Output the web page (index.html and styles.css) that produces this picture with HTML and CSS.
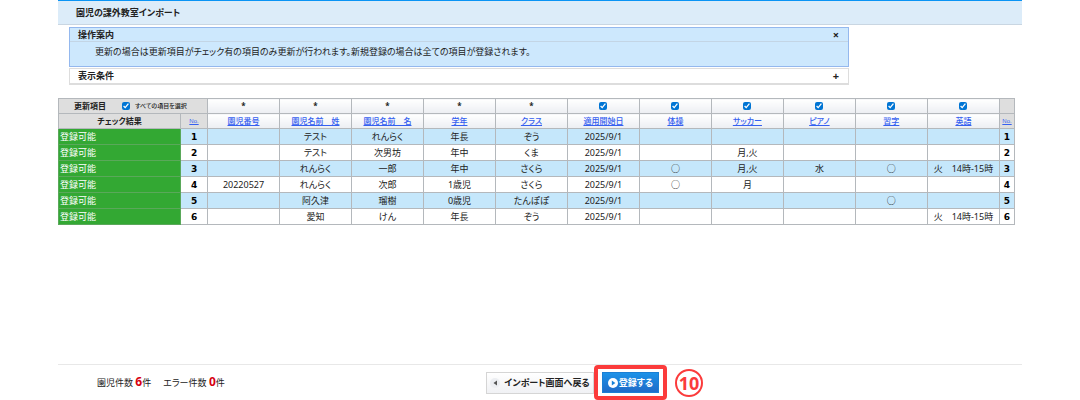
FILE: index.html
```html
<!DOCTYPE html>
<html lang="ja">
<head>
  <meta charset="UTF-8">
  <meta name="viewport" content="width=device-width, initial-scale=1.0">
  <title>園児の課外教室インポート</title>
  <link rel="stylesheet" href="styles.css">
</head>
<body>
  <div class="page">
    <header class="page-header">
      <h1>園児の課外教室インポート</h1>
    </header>

    <main>
      <div class="panels">
        <section class="panel panel-guide">
          <div class="panel-title">
            <h2>操作案内</h2>
            <button type="button" class="toggle" aria-label="閉じる">×</button>
          </div>
          <p class="panel-text">更新の場合は更新項目がチェック有の項目のみ更新が行われます。新規登録の場合は全ての項目が登録されます。</p>
        </section>
        <section class="panel">
          <div class="panel-title">
            <h2>表示条件</h2>
            <button type="button" class="toggle" aria-label="開く">+</button>
          </div>
        </section>
      </div>

      <table class="import-table">
        <colgroup>
          <col class="col-result">
          <col class="col-no">
          <col span="11">
          <col class="col-no-end">
        </colgroup>
        <thead>
          <tr>
            <th colspan="2" class="gray">
              <div class="select-all">
                <span>更新項目</span>
                <label><input type="checkbox" checked>すべての項目を選択</label>
              </div>
            </th>
            <th>*</th>
            <th>*</th>
            <th>*</th>
            <th>*</th>
            <th>*</th>
            <th><input type="checkbox" aria-label="適用開始日" checked></th>
            <th><input type="checkbox" aria-label="体操" checked></th>
            <th><input type="checkbox" aria-label="サッカー" checked></th>
            <th><input type="checkbox" aria-label="ピアノ" checked></th>
            <th><input type="checkbox" aria-label="習字" checked></th>
            <th><input type="checkbox" aria-label="英語" checked></th>
            <th class="gray"></th>
          </tr>
          <tr>
            <th class="gray">チェック結果</th>
            <th class="gray no-link"><a href="#">No.</a></th>
            <th><a href="#">園児番号</a></th>
            <th><a href="#">園児名前&#12288;姓</a></th>
            <th><a href="#">園児名前&#12288;名</a></th>
            <th><a href="#">学年</a></th>
            <th><a href="#">クラス</a></th>
            <th><a href="#">適用開始日</a></th>
            <th><a href="#">体操</a></th>
            <th><a href="#">サッカー</a></th>
            <th><a href="#">ピアノ</a></th>
            <th><a href="#">習字</a></th>
            <th><a href="#">英語</a></th>
            <th class="gray no-link"><a href="#">No.</a></th>
          </tr>
        </thead>
        <tbody>
          <tr>
            <td class="result">登録可能</td><td class="no">1</td>
            <td></td><td>テスト</td><td>れんらく</td><td>年長</td><td>ぞう</td><td>2025/9/1</td>
            <td></td><td></td><td></td><td></td><td></td><td class="no">1</td>
          </tr>
          <tr>
            <td class="result">登録可能</td><td class="no">2</td>
            <td></td><td>テスト</td><td>次男坊</td><td>年中</td><td>くま</td><td>2025/9/1</td>
            <td></td><td>月,火</td><td></td><td></td><td></td><td class="no">2</td>
          </tr>
          <tr>
            <td class="result">登録可能</td><td class="no">3</td>
            <td></td><td>れんらく</td><td>一郎</td><td>年中</td><td>さくら</td><td>2025/9/1</td>
            <td>○</td><td>月,火</td><td>水</td><td>○</td><td>火&#12288;14時-15時</td><td class="no">3</td>
          </tr>
          <tr>
            <td class="result">登録可能</td><td class="no">4</td>
            <td>20220527</td><td>れんらく</td><td>次郎</td><td>1歳児</td><td>さくら</td><td>2025/9/1</td>
            <td>○</td><td>月</td><td></td><td></td><td></td><td class="no">4</td>
          </tr>
          <tr>
            <td class="result">登録可能</td><td class="no">5</td>
            <td></td><td>阿久津</td><td>瑠樹</td><td>0歳児</td><td>たんぽぽ</td><td>2025/9/1</td>
            <td></td><td></td><td></td><td>○</td><td></td><td class="no">5</td>
          </tr>
          <tr>
            <td class="result">登録可能</td><td class="no">6</td>
            <td></td><td>愛知</td><td>けん</td><td>年長</td><td>ぞう</td><td>2025/9/1</td>
            <td></td><td></td><td></td><td></td><td>火&#12288;14時-15時</td><td class="no">6</td>
          </tr>
        </tbody>
      </table>
    </main>

    <footer class="page-footer">
      <div class="counts">
        <span>園児件数 <strong>6</strong>件</span>
        <span>エラー件数 <strong>0</strong>件</span>
      </div>
      <div class="actions">
        <button type="button" class="btn btn-back">
          <svg width="10" height="10" viewBox="0 0 10 10" aria-hidden="true">
            <circle cx="5" cy="5" r="5" fill="#eceef2"/>
            <path d="M7 2.5v5L3.5 5z" fill="#555"/>
          </svg>
          インポート画面へ戻る
        </button>
        <div class="frame">
          <button type="button" class="btn btn-submit">
            <svg width="10" height="10" viewBox="0 0 10 10" aria-hidden="true">
              <circle cx="5" cy="5" r="5" fill="#fff"/>
              <path d="M3.8 2.5v5L7.4 5z" fill="#1581d8"/>
            </svg>
            登録する
          </button>
        </div>
        <span class="step">10</span>
      </div>
    </footer>
  </div>
</body>
</html>
```
FILE: styles.css
```css
* {
  box-sizing: border-box;
}

body {
  margin: 0;
  background-color: #fff;
  color: #222;
  font-family: "Noto Sans", "Noto Sans CJK JP", sans-serif;
  font-size: 9px;
  line-height: 12px;
  font-feature-settings: "palt";
}

h1,
h2,
p {
  margin: 0;
  font-size: 9px;
}

button {
  font: inherit;
  font-feature-settings: inherit;
  color: inherit;
  cursor: pointer;
}

input[type="checkbox"] {
  width: 8px;
  height: 8px;
  margin: 0;
  accent-color: #0075d4;
}

.page {
  display: flex;
  flex-direction: column;
  min-height: 100vh;
  margin: 0 58px;
}

main {
  flex-grow: 1;
}

.page-header {
  padding: 6px 18px 5px;
  background-color: #dcecf9;
  border-top: 1px solid #0a94f5;
  border-bottom: 1px solid #c9d6e2;
}

.panels {
  display: flex;
  flex-direction: column;
  gap: 1px;
  margin: 2px 173px 0 11px;
}

.panel {
  border: 1px solid #ddd;
  border-bottom-width: 2px;
}

.panel-guide {
  min-height: 40px;
  background-color: #cde8fd;
  border: 1px solid #94b8ee;
}

.panel-title {
  display: flex;
  align-items: center;
  justify-content: space-between;
  height: 14px;
  padding: 0 8px;
}

.panel-guide .panel-title {
  border-bottom: 1px solid #c3d5e5;
}

.panel-text {
  padding: 4px 25px;
}

.toggle {
  width: 8px;
  padding: 0;
  border: 0;
  background: none;
  font-size: 11px;
  font-weight: bold;
  line-height: 12px;
  text-align: center;
}

.import-table {
  width: calc(100% - 7px);
  margin-top: 13px;
  table-layout: fixed;
  border-collapse: collapse;
}

.col-result {
  width: 122px;
}

.col-no {
  width: 27px;
}

.col-no-end {
  width: 15px;
}

.import-table th,
.import-table td {
  height: 16px;
  padding: 0;
  border: 1px solid #b4b8bc;
  line-height: 12px;
  text-align: center;
  white-space: nowrap;
}

.import-table th {
  height: 15px;
  background: linear-gradient(#fff, #eceef2);
  font-size: 8px;
}

.import-table th input {
  display: block;
  margin: 0 auto;
}

.import-table th.gray {
  background: #dedede;
}

.import-table tbody tr:nth-child(odd) {
  background-color: #c5e7fb;
}

.import-table th a {
  color: #3560f0;
  font-weight: 500;
}

.import-table th.no-link {
  font-family: "Liberation Sans", sans-serif;
  font-size: 6px;
}

.import-table td.result {
  padding-left: 1px;
  background-color: #33a833;
  border-color: #5aa85a;
  color: #fff;
  text-align: left;
}

.import-table td.no {
  color: #000;
  font-family: "DejaVu Sans", sans-serif;
  font-weight: bold;
}

.select-all {
  display: flex;
  align-items: center;
  gap: 16px;
  padding-left: 15px;
}

.select-all label {
  display: flex;
  align-items: center;
  gap: 5px;
  font-size: 6px;
  font-weight: 500;
}

.page-footer {
  display: grid;
  grid-template-columns: 428px 1fr;
  align-items: center;
  height: 36px;
  border-top: 1px solid #e8e8e8;
}

.counts {
  display: flex;
  gap: 12px;
  padding-left: 39px;
}

.counts strong {
  color: #d7000f;
  font-size: 12px;
}

.actions {
  display: flex;
  align-items: center;
}

.btn {
  display: flex;
  align-items: center;
  justify-content: center;
  padding: 0;
  font-weight: bold;
  white-space: nowrap;
}

.btn-back {
  gap: 4px;
  width: 108px;
  height: 22px;
  background: linear-gradient(#fff, #f0f1f4);
  border: 1px solid #d5d5d5;
}

.btn-submit {
  gap: 1px;
  width: 57px;
  height: 21px;
  background: linear-gradient(#1c92e8, #1f6bc8);
  border: 1px solid #1b7fd4;
  color: #fff;
}

.frame {
  padding: 3px 4px;
  border: 4px solid #fb3b3b;
  border-radius: 4px;
}

.step {
  display: flex;
  align-items: center;
  justify-content: center;
  width: 28px;
  height: 28px;
  margin-left: 8px;
  border: 2px solid #fb3b3b;
  border-radius: 50%;
  color: #fb3b3b;
  font-family: "Noto Sans", sans-serif;
  font-size: 18px;
  font-weight: bold;
  line-height: 18px;
}
```
